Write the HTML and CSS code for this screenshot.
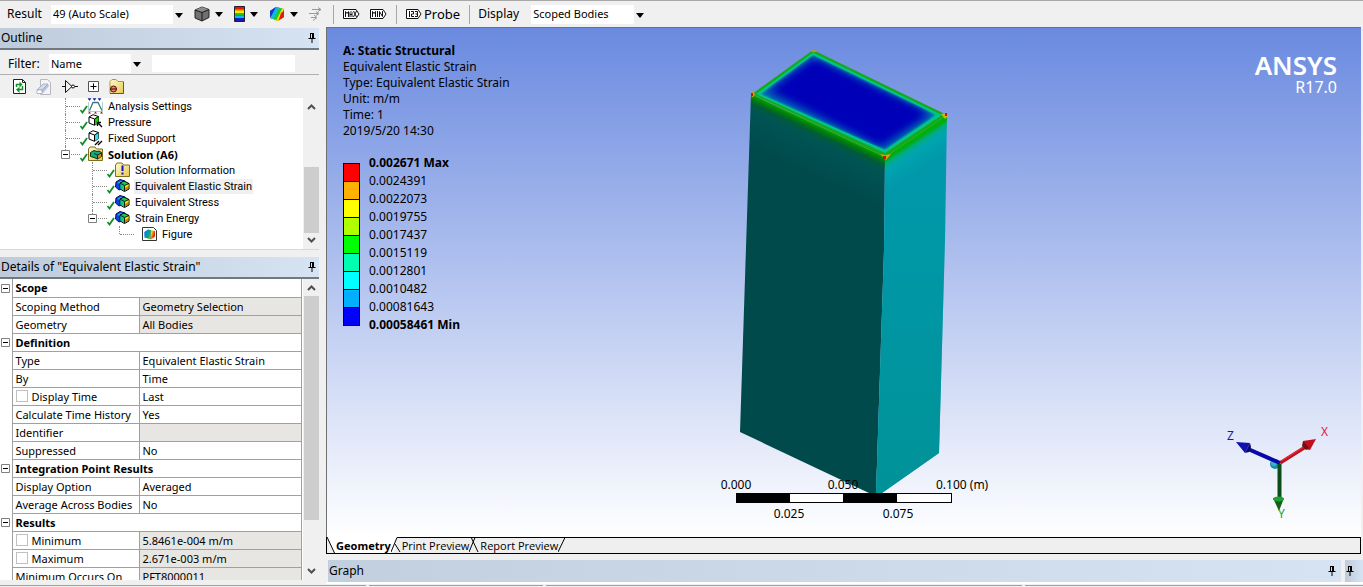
FILE: index.html
```html
<!DOCTYPE html>
<html lang="en">
<head>
<meta charset="utf-8">
<title>A: Static Structural - Mechanical</title>
<link rel="stylesheet" href="styles.css">
</head>
<body>
<svg class="defs" aria-hidden="true">
  <defs>
    <linearGradient id="rainbow" x1="0" y1="0" x2="1" y2="0.3">
      <stop offset="0" stop-color="#1414d8"/><stop offset=".25" stop-color="#00b8f0"/><stop offset=".5" stop-color="#20d020"/><stop offset=".7" stop-color="#f0e000"/><stop offset="1" stop-color="#e82000"/>
    </linearGradient>
    <linearGradient id="folder" x1="0" y1="0" x2="1" y2="1">
      <stop offset="0" stop-color="#fffbd0"/><stop offset="1" stop-color="#e8c850"/>
    </linearGradient>
    <symbol id="pin" viewBox="0 0 8 10"><path d="M2 0.5h4M2.5 0.5v5M5.5 0.5v5M4.5 0.5v5M0.5 5.5h7M4 6v4" fill="none" stroke="#000"/></symbol>
    <symbol id="check" viewBox="0 0 8 9"><path d="M0.5 5L2.5 7.500L7 1" fill="none" stroke="#148a28" stroke-width="1.800"/></symbol>
    <symbol id="result" viewBox="0 0 15 13">
      <path d="M1 3L5 0.500L10 2L9 9L4 11L0.500 8z" fill="#1040e0" stroke="#001060"/>
      <path d="M2 4L6 1.500L9 2.500L5 5z" fill="#20a8f0"/>
      <path d="M5 4L9 2L14 4.500L14 10L9.500 12.500L5 10z" fill="#20c850" stroke="#000"/>
      <path d="M5.500 4.500L9.500 6.500V12L5.500 9.800z" fill="#00b8e0"/><path d="M7.500 5.500L9.500 6.500V12L7.500 10.800z" fill="#28d828"/>
      <path d="M10 6.500L13.500 5V9.800L10 11.800z" fill="#f07010"/><path d="M10 6.500L13.500 5V7L10 9z" fill="#f0e800"/>
      <path d="M5 4L9.500 6.500L14 4.500M9.500 6.500V12" fill="none" stroke="#000" stroke-width=".8"/>
    </symbol>
    <symbol id="cube" viewBox="0 0 12 12">
      <path d="M1 3L5 0.700L10.500 2.500V8.500L6.500 11.300L1 9z" fill="#fff" stroke="#000"/>
      <path d="M6.500 5L10.500 2.500V8.500L6.500 11.300z" fill="currentColor"/>
      <path d="M1 3L6.500 5L10.500 2.500M6.500 5V11" fill="none" stroke="#000"/>
    </symbol>
    <symbol id="up" viewBox="0 0 9 6"><path d="M1 5L4.500 1.500L8 5" fill="none" stroke="#505050" stroke-width="2"/></symbol>
    <symbol id="down" viewBox="0 0 9 6"><path d="M1 1L4.500 4.500L8 1" fill="none" stroke="#505050" stroke-width="2"/></symbol>
    <symbol id="minus" viewBox="0 0 9 9"><path d="M0.500 0.500h8v8h-8z" fill="#fff" stroke="#808080"/><path d="M2 4.500h5" stroke="#000"/></symbol>
  </defs>
</svg>

<header class="toolbar">
  <label class="label" for="result">Result</label>
  <span class="combo combo-result"><select id="result"><option>49 (Auto Scale)</option></select></span>
  <button class="tool menu" aria-label="Geometry display">
    <svg width="16" height="16" viewBox="0 0 16 16"><path d="M1 4L8 1L15 3.500V11.500L8 15L1 12z" fill="#707070" stroke="#222"/><path d="M1 4L8 6.500L15 3.500L8 1z" fill="#8c8c8c"/><path d="M1 4L8 6.500L15 3.500M8 6.500V15" fill="none" stroke="#1a1a1a"/></svg>
  </button>
  <button class="tool menu" aria-label="Contours">
    <svg width="11" height="16" viewBox="0 0 11 16"><path d="M.5.5h10v15H.5z" fill="#1018c0" stroke="#222"/><path d="M1 1h9v3H1z" fill="#e81800"/><path d="M1 3.500h9v2H1z" fill="#f8a000"/><path d="M1 5h9v2H1z" fill="#f4f000"/><path d="M1 7h9v2.500H1z" fill="#18c818"/><path d="M1 9.500h9v2.500H1z" fill="#00c0f0"/></svg>
  </button>
  <button class="tool menu" aria-label="Edges">
    <svg width="16" height="16" viewBox="0 0 16 16"><path d="M1 5L7 1L15 3V11L9 15L1 12z" fill="#e83010"/><path d="M1 5L7 1L15 3L10 15L9 15L1 12z" fill="#f0e000"/><path d="M1 5L7 1L13 2.500L7.500 14L1 12z" fill="#20c830"/><path d="M1 5L7 1L10 1.700L4.500 13L1 12z" fill="#10b8e8"/><path d="M1 5L7 1L2 10.500L1 11z" fill="#1830d8"/><path d="M12 7L15 5V11L9.500 14.500z" fill="#d82010"/></svg>
  </button>
  <button class="tool vectors" aria-label="Vectors">
    <svg width="15" height="14" viewBox="0 0 15 14" fill="none" stroke="#999"><path d="M4 2.500h9M10 .5l3 2-3 2M1 6.500h10M8 4.500l3 2-3 2M3 10.500h5M6 8l3 2.500L5 13.500"/></svg>
  </button>
  <span class="rule rule-first"></span>
  <button class="tool" aria-label="Maximum">
    <svg width="17" height="10" viewBox="0 0 17 10" fill="none" stroke="#111"><path d="M.5.5h12.500l3 4.500-3 4.500H.5z" fill="#fff"/><path d="M2.500 8V2.500l1.500 2 1.500-2V8M7 8V3.500L8 2.500l1 1V8M7 5.500h2M10.500 2l3 6M13.500 2l-3 6"/></svg>
  </button>
  <button class="tool" aria-label="Minimum">
    <svg width="17" height="10" viewBox="0 0 17 10" fill="none" stroke="#111"><path d="M.5.5h12.500l3 4.500-3 4.500H.5z" fill="#fff"/><path d="M2.500 8V2.500l1.500 2 1.500-2V8M7.500 2v6M9.500 8V2.500l3 5V2"/></svg>
  </button>
  <span class="rule"></span>
  <button class="tool probe">
    <svg width="16" height="10" viewBox="0 0 16 10" fill="none" stroke="#111"><path d="M.5.5H12l3 4.500-3 4.500H.5z" fill="#fff"/><path d="M3.500 2v6M5 2.500h2.500V5H5.500v2.500H8M9 2.500h2.500v5H9M9.500 5h2"/></svg>
    Probe
  </button>
  <span class="rule"></span>
  <label class="label display" for="display">Display</label>
  <span class="combo combo-display"><select id="display"><option>Scoped Bodies</option></select></span>
</header>

<main class="workspace">
  <aside class="side">
    <section class="outline">
      <h2 class="bar"><span>Outline</span><button class="pin" aria-label="Pin outline"><svg width="8" height="10"><use href="#pin"/></svg></button></h2>
      <div class="filter">
        <label for="filter">Filter:</label>
        <span class="combo combo-filter"><select id="filter"><option>Name</option></select></span>
        <input class="filter-text" type="text" aria-label="Filter text">
      </div>
      <div class="actions">
        <button class="tool" aria-label="Refresh"><svg width="13" height="15" viewBox="0 0 13 15"><path d="M.5.5h9l3 3v11H.5z" fill="#fff" stroke="#222"/><path d="M9.500.5v3h3" fill="none" stroke="#222"/><path d="M3.500 8V5.500h4M9.500 7v3.500h-4" fill="none" stroke="#149028" stroke-width="1.500"/><path d="M6.500 2.500v6L9.500 5.500zM6.500 8v6L3 10.500z" fill="#149028"/></svg></button>
        <button class="tool" aria-label="Clear"><svg width="16" height="16" viewBox="0 0 16 16"><path d="M4.500.5h7l3 3v12h-10z" fill="#f4f4f8" stroke="#b8b8c0"/><path d="M1 11L7 5h5l1 2-6 7H1z" fill="#b8c0d8"/><path d="M1 11L7 5h5L6 11z" fill="#d4daec" stroke="#98a0b8" stroke-width=".7"/><path d="M1 11h5v3.500H1z" fill="#fff" stroke="#98a0b8" stroke-width=".7"/></svg></button>
        <button class="tool" aria-label="Expand branch"><svg width="16" height="13" viewBox="0 0 16 13" fill="none" stroke="#111"><path d="M0 6.500h3.500M3.500.5v12L10 6.500zM12.500 6.500H16"/><circle cx="11" cy="6.500" r="1.500" fill="#fff"/></svg></button>
        <button class="tool" aria-label="Expand all"><svg width="11" height="11" viewBox="0 0 11 11" fill="#fff" stroke="#555"><path d="M.5.5h10v10H.5z"/><path d="M2.500 5.500h6M5.500 2.500v6" stroke="#000"/></svg></button>
        <button class="tool" aria-label="Hide folders"><svg width="15" height="15" viewBox="0 0 15 15"><path d="M1 14.500V2.500L3 .5h4l2 2h5.500v12z" fill="url(#folder)" stroke="#b09830"/><path d="M1 14.500h13.500V3" fill="none" stroke="#665a20"/><circle cx="4.500" cy="10" r="3" fill="#f08070" stroke="#501008"/><path d="M1.500 10h6" stroke="#400"/></svg></button>
      </div>
      <div class="scroller tree-area">
        <ul class="tree">
          <li class="node"><span class="guide"></span><svg class="glyph" viewBox="0 0 24 16"><use href="#check" y="7" width="8" height="9"/><path d="M9.500 12.500L13 4.500h5l4 8" fill="none" stroke="#3a7878" stroke-width="1.300"/><path d="M8.500 4v10M22.500 4v10M8 13.500h15" stroke="#b8ccd0"/><path d="M8 .5l1.500 2L11 .5zM13 .5l1.500 2L16 .5zM18 .5l1.500 2L21 .5z" fill="#102090" stroke="#102090" stroke-width=".5"/><path d="M8 15.500l1.500-2 1.500 2zM14 15.500l1.500-2 1.500 2zM20 15.500l1.500-2 1.500 2z" fill="#a01010"/></svg><span class="name">Analysis Settings</span></li>
          <li class="node"><span class="guide"></span><svg class="glyph green" viewBox="0 0 24 16"><use href="#check" y="7" width="8" height="9"/><use href="#cube" x="8" y="0" width="12" height="12"/><path d="M22 13l-4-4M17.500 12V8.500H21" fill="none" stroke="#000" stroke-width="1.300"/></svg><span class="name">Pressure</span></li>
          <li class="node"><span class="guide"></span><svg class="glyph cyan" viewBox="0 0 24 16"><use href="#check" y="7" width="8" height="9"/><use href="#cube" x="8" y="0" width="12" height="12"/><path d="M15 15l4-4M18 15l4-4" stroke="#000" stroke-width="1.300"/></svg><span class="name">Fixed Support</span></li>
          <li class="node last"><span class="guide"><button class="fold" aria-label="Collapse Solution"><svg width="9" height="9"><use href="#minus"/></svg></button></span><svg class="glyph" viewBox="0 0 24 16"><use href="#check" y="7" width="8" height="9"/><path d="M8.500 14.500V3L10 1h5l1.500 2h6v11.500z" fill="url(#folder)" stroke="#80701c"/><path d="M10.500 6.500L14 4.500l3 1 2-.5 2.500 1.500v4L17.500 13 14 11.500l-3.500-1z" fill="#18a878" stroke="#103018"/><path d="M14 7.500l3.500 1.500v4M17.500 9l4-2" fill="none" stroke="#103018"/><path d="M18 9.500l3-1.500v2.500l-3 2z" fill="#e08020"/></svg><strong class="name">Solution (A6)</strong></li>
          <li class="node l2"><span class="guide"></span><svg class="glyph" viewBox="0 0 24 16"><use href="#check" y="7" width="8" height="9"/><path d="M8.500 14.500V3L10 1h5l1.500 2h6v11.500z" fill="url(#folder)" stroke="#80701c"/><path d="M15.500 3.500v5.500M15.500 10.500v2" stroke="#1010c0" stroke-width="2"/></svg><span class="name">Solution Information</span></li>
          <li class="node l2"><span class="guide"></span><svg class="glyph" viewBox="0 0 24 16"><use href="#check" y="7" width="8" height="9"/><use href="#result" x="8" y="1" width="15" height="13"/></svg><span class="name selected">Equivalent Elastic Strain</span></li>
          <li class="node l2"><span class="guide"></span><svg class="glyph" viewBox="0 0 24 16"><use href="#check" y="7" width="8" height="9"/><use href="#result" x="8" y="1" width="15" height="13"/></svg><span class="name">Equivalent Stress</span></li>
          <li class="node l2 last"><span class="guide"><button class="fold" aria-label="Collapse Strain Energy"><svg width="9" height="9"><use href="#minus"/></svg></button></span><svg class="glyph" viewBox="0 0 24 16"><use href="#check" y="7" width="8" height="9"/><use href="#result" x="8" y="1" width="15" height="13"/></svg><span class="name">Strain Energy</span></li>
          <li class="node l3 last"><span class="guide"></span><svg class="glyph" viewBox="0 0 24 16"><path d="M8.500 1.500h11l3 3v10h-14z" fill="#fff" stroke="#333"/><path d="M10.500 6L14 3.500l7 1.500v5.500L17 13.500l-6.500-2z" fill="url(#rainbow)"/><path d="M10.500 6L14 3.500l3 1v8.500l-6.500-1.500z" fill="#0070d0" opacity=".5"/></svg><span class="name">Figure</span></li>
        </ul>
        <div class="scroll"><svg width="9" height="6"><use href="#up"/></svg><span class="thumb thumb-tree"></span><svg width="9" height="6"><use href="#down"/></svg></div>
      </div>
    </section>

    <section class="details">
      <h2 class="bar"><span>Details of "Equivalent Elastic Strain"</span><button class="pin" aria-label="Pin details"><svg width="8" height="10"><use href="#pin"/></svg></button></h2>
      <div class="scroller">
        <div class="grid-clip">
        <table class="grid">
          <colgroup><col class="c-fold"><col class="c-key"><col></colgroup>
          <tbody>
          <tr><td><button class="fold" aria-label="Collapse Scope"><svg width="9" height="9"><use href="#minus"/></svg></button></td><th colspan="2">Scope</th></tr>
          <tr><td></td><td>Scoping Method</td><td class="ro">Geometry Selection</td></tr>
          <tr><td></td><td>Geometry</td><td class="ro">All Bodies</td></tr>
          <tr><td><button class="fold" aria-label="Collapse Definition"><svg width="9" height="9"><use href="#minus"/></svg></button></td><th colspan="2">Definition</th></tr>
          <tr><td></td><td>Type</td><td>Equivalent Elastic Strain</td></tr>
          <tr><td></td><td>By</td><td>Time</td></tr>
          <tr><td></td><td><label class="param"><input type="checkbox">Display Time</label></td><td>Last</td></tr>
          <tr><td></td><td>Calculate Time History</td><td>Yes</td></tr>
          <tr><td></td><td>Identifier</td><td class="ro"></td></tr>
          <tr><td></td><td>Suppressed</td><td>No</td></tr>
          <tr><td><button class="fold" aria-label="Collapse Integration Point Results"><svg width="9" height="9"><use href="#minus"/></svg></button></td><th colspan="2">Integration Point Results</th></tr>
          <tr><td></td><td>Display Option</td><td>Averaged</td></tr>
          <tr><td></td><td>Average Across Bodies</td><td>No</td></tr>
          <tr><td><button class="fold" aria-label="Collapse Results"><svg width="9" height="9"><use href="#minus"/></svg></button></td><th colspan="2">Results</th></tr>
          <tr><td></td><td><label class="param"><input type="checkbox">Minimum</label></td><td class="ro">5.8461e-004 m/m</td></tr>
          <tr><td></td><td><label class="param"><input type="checkbox">Maximum</label></td><td class="ro">2.671e-003 m/m</td></tr>
          <tr><td></td><td>Minimum Occurs On</td><td class="ro">PFT8000011</td></tr>
          </tbody>
        </table>
        </div>
        <div class="scroll"><svg width="9" height="6"><use href="#up"/></svg><span class="thumb thumb-grid"></span><svg width="9" height="6"><use href="#down"/></svg></div>
      </div>
    </section>
  </aside>

  <section class="stage">
    <div class="viewport">
      <div class="notes">
        <strong>A: Static Structural</strong>
        <span>Equivalent Elastic Strain</span>
        <span>Type: Equivalent Elastic Strain</span>
        <span>Unit: m/m</span>
        <span>Time: 1</span>
        <span>2019/5/20 14:30</span>
        <div class="legend">
          <div class="swatches"><i class="s1"></i><i class="s2"></i><i class="s3"></i><i class="s4"></i><i class="s5"></i><i class="s6"></i><i class="s7"></i><i class="s8"></i><i class="s9"></i></div>
          <div class="values"><strong>0.002671 Max</strong><span>0.0024391</span><span>0.0022073</span><span>0.0019755</span><span>0.0017437</span><span>0.0015119</span><span>0.0012801</span><span>0.0010482</span><span>0.00081643</span><strong>0.00058461 Min</strong></div>
        </div>
      </div>

      <svg class="model" width="292" height="480" viewBox="698 45 292 480">
        <defs>
          <linearGradient id="left" gradientUnits="userSpaceOnUse" x1="818" y1="126" x2="798" y2="169">
            <stop offset="0" stop-color="#00a000"/><stop offset=".06" stop-color="#008008"/><stop offset=".16" stop-color="#005c38"/><stop offset=".3" stop-color="#005454"/><stop offset="1" stop-color="#004a4c"/>
          </linearGradient>
          <linearGradient id="right" gradientUnits="userSpaceOnUse" x1="916" y1="136" x2="933" y2="162">
            <stop offset="0" stop-color="#00b400"/><stop offset=".1" stop-color="#00ac10"/><stop offset=".22" stop-color="#00ac80"/><stop offset=".4" stop-color="#00a4b0"/><stop offset="1" stop-color="#0098aa"/>
          </linearGradient>
          <linearGradient id="fade" x1="0" y1="0" x2="0" y2="1"><stop offset=".2" stop-color="#009498" stop-opacity="0"/><stop offset="1" stop-color="#009298"/></linearGradient>
          <clipPath id="top"><path d="M813 55L760 94L885 150L937 115z"/></clipPath>
          <filter id="soft" x="-20%" y="-20%" width="140%" height="140%"><feGaussianBlur stdDeviation="4"/></filter>
          <filter id="softer"><feGaussianBlur stdDeviation="1"/></filter>
        </defs>
        <path d="M751 94L885 157L884 250L876 495L869 493L740 432z" fill="url(#left)"/>
        <path d="M885 157L947 115L945 240L939 453L882 493L876 495L884 250z" fill="url(#right)"/>
        <path d="M885 157L947 115L945 240L939 453L882 493L876 495L884 250z" fill="url(#fade)"/>
        <path d="M813 50L752 94L885 157L947 115z" fill="#18a818"/>
        <path d="M813 52.500L756 94L885 153L942 115z" fill="#00c48c"/>
        <g clip-path="url(#top)"><path d="M813 56L761 94L885 149L935 115z" fill="#0068b8" filter="url(#softer)"/><path d="M814 58L768 91L881 147L930 114z" fill="#0000b8" filter="url(#soft)"/><path d="M814 65L783 88L878 137L920 113z" fill="#0000b8" filter="url(#soft)"/></g>
        <path d="M810 50.500h7l-3 2zM752 91.500l3 2-2 4-2-2z" fill="#d8a010"/><path d="M880 154l5 1 6-1-5 6z" fill="#d8a010"/><path d="M941 114l5-1 2 3-3 3z" fill="#c8b810"/><path d="M751 93h2v3h-2zM883 156h3v3h-3zM945 113h2v3h-2z" fill="#d01010"/>
        <g class="ruler">
          <rect x="736.500" y="493.500" width="215" height="9" fill="#fff" stroke="#000"/>
          <path d="M737 493h53v10h-53zM843 493h54v10h-54z"/>
          <text x="736" y="489">0.000</text><text x="843" y="489">0.050</text><text x="936" y="489" class="start">0.100 (m)</text>
          <text x="789" y="518">0.025</text><text x="898" y="518">0.075</text>
        </g>
      </svg>

      <div class="brand"><b>ANSYS</b><span>R17.0</span></div>

      <svg class="triad" width="110" height="106" viewBox="1224 424 110 106">
        <circle cx="1275" cy="464" r="5" fill="#1890a8"/><circle cx="1274" cy="463" r="3" fill="#38b0c8"/>
        <path d="M1280 463L1307 446" stroke="#c01020" stroke-width="3.500"/><path d="M1280 462L1307 445" stroke="#e83038"/>
        <path d="M1303 441L1316 439L1310 450L1305 449z" fill="#c01020"/><path d="M1303 441l6 7-3 2-4-4z" fill="#701010"/>
        <path d="M1280 463L1248 449" stroke="#0808a8" stroke-width="4"/><path d="M1236 442L1250 443L1245 453z" fill="#1010b0"/><path d="M1250 443l-5 10 4-1 2-5z" fill="#080860"/>
        <path d="M1279.500 464V500" stroke="#0c4c18" stroke-width="4"/><path d="M1273 498L1284 498L1279 511z" fill="#106018"/><ellipse cx="1278.500" cy="499" rx="5.500" ry="2.500" fill="#20a030"/>
        <text x="1227" y="440" fill="#1818a8">Z</text><text x="1321" y="436" fill="#e02040">X</text><text x="1278" y="518" fill="#20a030">Y</text>
      </svg>
    </div>
    <nav class="tabs">
      <svg width="8" height="16" viewBox="0 0 8 16"><path d="M0 0H8V16H7.500z" fill="#fff"/><path d="M0 0L7.500 16" stroke="#000" fill="none"/></svg>
      <button class="tab active">Geometry</button>
      <svg width="10" height="16" viewBox="0 0 10 16"><path d="M6 0H0V15H3z" fill="#fff"/><path d="M0 15L6 .5H10M4 7L9 15" stroke="#000" fill="none"/></svg>
      <button class="tab">Print Preview</button>
      <svg width="10" height="16" viewBox="0 0 10 16"><path d="M0 15L6 .5M0 .5H10M2 0L9 15" stroke="#000" fill="none"/></svg>
      <button class="tab">Report Preview</button>
      <svg width="9" height="16" viewBox="0 0 9 16"><path d="M0 15L7 .5M0 .5H9" stroke="#000" fill="none"/></svg>
      <span class="tab-fill"></span>
    </nav>
    <div class="graph-row">
      <h2 class="bar graph"><span>Graph</span><button class="pin" aria-label="Pin graph"><svg width="8" height="10"><use href="#pin"/></svg></button></h2>
      <h2 class="bar next"><button class="pin" aria-label="Pin tabular data"><svg width="8" height="10"><use href="#pin"/></svg></button></h2>
    </div>
  </section>
</main>
<footer class="edge"><span class="e1"></span><span class="e2"></span><span class="e3"></span><span class="e4"></span></footer>
</body>
</html>
```
FILE: styles.css
```css
* { box-sizing: border-box; }
body {
  margin: 0;
  height: 100vh;
  display: flex;
  flex-direction: column;
  overflow: hidden;
  background: #f0f0f0;
  color: #000;
  font-family: "Noto Sans", "Open Sans", sans-serif;
  font-size: 11px;
  line-height: 16px;
}
.defs { position: absolute; width: 0; height: 0; }
h2, ul { margin: 0; padding: 0; }
button { border: 0; padding: 0; background: none; font: inherit; color: inherit; }
svg { display: block; flex: none; }

/* toolbar */
.toolbar {
  flex: none;
  height: 27px;
  display: flex;
  align-items: center;
  border-top: 1px solid #a8a8a8;
  padding-left: 7px;
  font-size: 12px;
}
.label { width: 44px; }
.combo { position: relative; display: flex; height: 19px; }
.combo select {
  appearance: none;
  width: 100%;
  border: 0;
  border-right: 12px solid #f0f0f0;
  border-radius: 0;
  background: #fff;
  padding: 0 0 0 2px;
  color: #000;
  font: inherit;
  font-size: 11px;
}
.combo::after, .menu::after {
  content: "";
  border: 4px solid transparent;
  border-top: 5px solid #000;
  border-bottom: 0;
}
.combo::after { position: absolute; right: 2px; top: 8px; }
.combo-result { width: 134px; }
.combo-display { width: 115px; }
.combo-filter { width: 94px; }
.tool { display: flex; align-items: center; justify-content: center; }
.menu { gap: 5px; margin-left: 9px; }
.menu + .menu { margin-left: 11px; }
.vectors { margin-left: 10px; }
.rule { width: 1px; height: 19px; background: #a8a8a8; margin: 0 9px; }
.rule-first { margin-left: 10px; }
.tool + .tool:not(.menu):not(.vectors) { margin-left: 10px; }
.probe { gap: 2px; font-size: 13px; }
.display { width: 53px; margin-left: -1px; }

/* work area */
.workspace { flex: 1; min-height: 0; display: flex; }
.side { flex: none; width: 326px; padding: 1px 7px 4px 0; display: flex; flex-direction: column; }
.bar {
  flex: none;
  height: 22px;
  display: flex;
  align-items: center;
  justify-content: space-between;
  padding: 0 3px 0 1px;
  background: linear-gradient(90deg, #becbda, #d6e3f2);
  border-bottom: 2px solid #707880;
  font-size: 12px;
  font-weight: 400;
}
.outline, .details { display: flex; flex-direction: column; }
.outline { flex: none; }
.details { flex: 1; min-height: 0; margin-top: 7px; }
.filter { height: 25px; display: flex; align-items: center; border-bottom: 1px solid #b0b0b0; padding: 3px 0 0 8px; font-size: 12px; }
.filter label { width: 41px; }
.filter-text { width: 143px; height: 17px; margin-left: 9px; border: 0; background: #fff; }
.actions { height: 23px; display: flex; align-items: center; gap: 10px; padding-left: 13px; }
.actions .tool + .tool:not(.menu):not(.vectors) { margin-left: 0; }
.scroller { display: flex; background: #fff; min-height: 0; }
.details .scroller { flex: 1; }
.tree-area { height: 152px; border-bottom: 1px solid #d8d8d8; }
.tree { flex: 1; list-style: none; font-family: Roboto, "Liberation Sans", sans-serif; }
.node { display: flex; height: 16px; align-items: center; padding-left: 61px; white-space: nowrap; }
.l2 { padding-left: 88px; }
.l3 { padding-left: 115px; }
.guide { position: relative; width: 19px; height: 16px; }
.guide::before { content: ""; position: absolute; left: 4px; top: 0; bottom: 0; border-left: 1px dotted #888; }
.last .guide::before { bottom: 8px; }
.guide::after { content: ""; position: absolute; left: 5px; right: 0; top: 8px; border-top: 1px dotted #888; }
.fold { display: block; width: 9px; height: 9px; }
.guide .fold { position: absolute; z-index: 1; left: 0; top: 4px; }
.glyph { width: 24px; height: 16px; margin-right: 3px; }
.green { color: #18d018; }
.cyan { color: #40d8e8; }
.name { padding: 0 1px; line-height: 15px; }
strong.name { font-family: "Noto Sans", sans-serif; }
.selected { background: #f0f0f0; }
.scroll { flex: none; width: 16px; display: flex; flex-direction: column; align-items: center; padding: 6px 0; background: #f0f0f0; }
.thumb { width: 15px; background: #cdcdcd; }
.thumb-tree { height: 66px; margin: auto 0 4px; }
.thumb-grid { height: 224px; margin: 5px 0 auto; }

/* details grid */
.grid-clip { flex: 1; overflow: hidden; padding-right: 1px; }
.grid { width: 100%; table-layout: fixed; border-collapse: collapse; line-height: 17px; }
.c-fold { width: 12px; }
.c-key { width: 127px; }
.grid td, .grid th { height: 18px; padding: 0 0 0 3px; border: 1px solid #a0a0a0; border-top: 0; text-align: left; white-space: nowrap; }
.grid th { font-weight: 700; }
.grid td:first-child { border-width: 0 1px 0 0; padding: 0 0 0 1px; }
.grid .ro { background: #e8e6e2; }
.param { display: flex; align-items: center; gap: 4px; }
.param input { appearance: none; width: 12px; height: 12px; margin: 0; border: 1px solid #c0c0c0; background: #fff; }

/* graphics window */
.stage { flex: 1; min-width: 0; display: flex; flex-direction: column; }
.viewport {
  position: relative;
  flex: 1;
  min-height: 0;
  overflow: hidden;
  margin-right: 2px;
  border-top: 1px solid #707070;
  border-left: 1px solid #707070;
  background: linear-gradient(#6a8ae0, #fff);
}
.notes { display: flex; flex-direction: column; padding: 15px 0 0 16px; font-size: 12px; }
.legend { display: flex; gap: 9px; margin-top: 15px; }
.swatches { width: 17px; height: 163px; margin-top: 9px; display: flex; flex-direction: column; border: 1px solid #000; }
.swatches i { flex: 1; border-bottom: 1px solid #000; }
.s1 { background: #f00; } .s2 { background: #ffb000; } .s3 { background: #ff0; }
.s4 { background: #b0ff00; } .s5 { background: #0f0; } .s6 { background: #00ffb0; }
.s7 { background: #0ff; } .s8 { background: #00b0ff; } .swatches .s9 { background: #00f; border: 0; }
.values { display: flex; flex-direction: column; justify-content: space-between; height: 178px; line-height: 18px; }
.model { position: absolute; top: 17px; left: calc(50% - 146px); }
.ruler text { font-size: 12px; text-anchor: middle; }
.ruler .start { text-anchor: start; }
.brand { position: absolute; top: 23px; right: 24px; display: flex; flex-direction: column; align-items: flex-end; color: #fff; font-size: 16px; line-height: 16px; }
.brand b { font-size: 26px; line-height: 28px; font-weight: 600; }
.triad { position: absolute; right: 27px; bottom: 7px; font-size: 12px; }
.tabs { flex: none; display: flex; height: 17px; margin-right: 2px; border: 1px solid #000; border-top: 0; background: #efefef; }
.tab { border-top: 1px solid #000; padding-left: 1px; white-space: nowrap; line-height: 15px; font-family: "Open Sans", sans-serif; font-size: 11px; }
.tab.active { background: #fff; border-color: #fff; font-family: "Noto Sans", sans-serif; font-weight: 700; }
.tab-fill { flex: 1; border-top: 1px solid #000; }
.graph-row { flex: none; display: flex; gap: 4px; padding: 6px 0 0 2px; border-bottom: 2px solid #fff; }
.graph-row .bar { border: 0; padding: 0 5px 0 1px; }
.graph { flex: 1; background: linear-gradient(90deg, #c2cfde, #d6e3f2); }
.graph-row .next { width: 18px; }
.edge { flex: none; display: flex; gap: 3px; height: 3px; }
.edge span { height: 1px; margin-top: 1px; background: #a0a0a0; }
.e1 { flex: 366; } .e2 { flex: 174; } .e3 { flex: 475; } .e4 { flex: 338; }
```
